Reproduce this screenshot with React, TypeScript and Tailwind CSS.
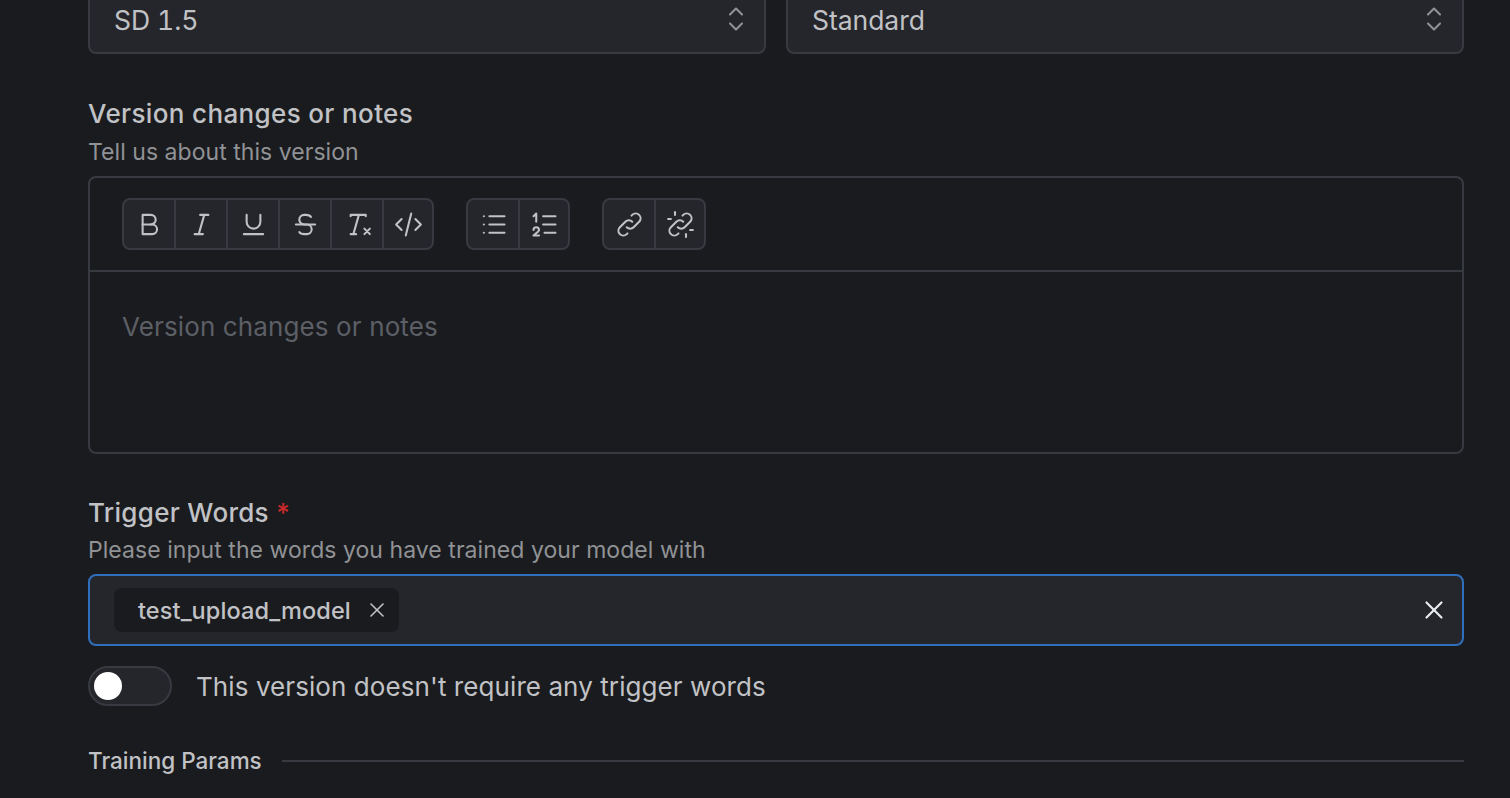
import { TbBold, TbItalic, TbUnderline, TbStrikethrough, TbClearFormatting, TbCode, TbList, TbListNumbers, TbSelector, TbX } from "react-icons/tb";
import type { ComponentType } from "react";

type IconProps = { size?: number; strokeWidth?: number };

const TbLinkOld = ({ size = 32, strokeWidth = 1.5 }: IconProps) => (
  <svg width={size} height={size} viewBox="0 0 24 24" fill="none" stroke="currentColor" strokeWidth={strokeWidth} strokeLinecap="round" strokeLinejoin="round">
    <path d="M10 14a3.5 3.5 0 0 0 5 0l4 -4a3.5 3.5 0 0 0 -5 -5l-.5 .5" />
    <path d="M14 10a3.5 3.5 0 0 0 -5 0l-4 4a3.5 3.5 0 0 0 5 5l.5 -.5" />
  </svg>
);

const TbUnlinkOld = ({ size = 32, strokeWidth = 1.5 }: IconProps) => (
  <svg width={size} height={size} viewBox="0 0 24 24" fill="none" stroke="currentColor" strokeWidth={strokeWidth} strokeLinecap="round" strokeLinejoin="round">
    <path d="M10 14a3.5 3.5 0 0 0 5 0l4 -4a3.5 3.5 0 0 0 -5 -5l-.5 .5" />
    <path d="M14 10a3.5 3.5 0 0 0 -5 0l-4 4a3.5 3.5 0 0 0 5 5l.5 -.5" />
    <path d="M16 21v-2" />
    <path d="M19 16h2" />
    <path d="M3 8h2" />
    <path d="M8 3v2" />
  </svg>
);

function Group({ icons }: { icons: ComponentType<IconProps>[] }) {
  return (
    <div className="flex">
      {icons.map((Icon, i) => (
        <div
          key={i}
          className={`flex h-[52px] w-[54px] items-center justify-center border-2 border-[#373a40] bg-[#25262b] text-[#c1c2c5] first:rounded-l-lg last:w-[52px] last:rounded-r-lg ${i > 0 ? "-ml-0.5" : ""}`}
        >
          <Icon size={33} strokeWidth={1.5} />
        </div>
      ))}
    </div>
  );
}

function Select({ value }: { value: string }) {
  return (
    <div className="flex h-[66px] flex-1 items-center justify-between rounded-lg border-2 border-[#373a40] bg-[#25262b] pl-6 pr-2.5 text-[26.5px] tracking-[-0.05px] text-[#c1c2c5] tabular-nums">
      <span>{value}</span>
      <TbSelector size={36} strokeWidth={1.4} className="-translate-y-0.5 text-[#909296]" />
    </div>
  );
}

export default function App() {
  return (
    <div className="h-[798px] overflow-hidden bg-[#1a1b1e] pl-[88px] pr-[46px] font-['Inter',sans-serif]">
      <div className="-mt-[12px] flex gap-5">
        <Select value="SD 1.5" />
        <Select value="Standard" />
      </div>

      <div className="mt-[41px] h-[38px] text-[26px] font-medium leading-[37px] tracking-[0.36px] text-[#c1c2c5]">Version changes or notes</div>
      <div className="h-[37px] text-[23px] leading-[38px] tracking-[0.04px] text-[#909296]">Tell us about this version</div>
      <div className="mt-1.5 h-[278px] rounded-lg border-2 border-[#373a40]">
        <div className="flex h-[94px] gap-8 border-b-2 border-[#373a40] pl-8 pt-5">
          <Group icons={[TbBold, TbItalic, TbUnderline, TbStrikethrough, TbClearFormatting, TbCode]} />
          <Group icons={[TbList, TbListNumbers]} />
          <Group icons={[TbLinkOld, TbUnlinkOld]} />
        </div>
        <div className="pl-8 pt-[33px] text-[26px] leading-[44px] tracking-[0.12px] text-[#5c5f66]">Version changes or notes</div>
      </div>

      <div className="mt-10 h-[38px] text-[26px] font-medium leading-[37px] tracking-[0.3px] text-[#c1c2c5]">
        Trigger Words <span className="text-[#c92a2a]">*</span>
      </div>
      <div className="h-[36px] text-[23px] leading-[36px] tracking-[0.05px] text-[#909296]">Please input the words you have trained your model with</div>
      <div className="mt-1.5 flex h-[72px] items-center justify-between rounded-lg border-2 border-[#2f6fbb] bg-[#25262b] pl-6 pr-[13px]">
        <div className="flex h-11 items-center gap-[14px] rounded-lg bg-[#1a1b1e] pl-6 pr-2.5 text-[23.5px] font-medium tracking-[0.1px] text-[#c1c2c5]">
          <span className="pt-0.5">test_upload_model</span>
          <TbX size={24} strokeWidth={1.6} />
        </div>
        <TbX size={30} strokeWidth={1.7} className="text-[#e9ecef]" />
      </div>

      <div className="mt-5 flex items-center gap-6">
        <div className="flex h-10 w-[84px] items-center rounded-full border-2 border-[#373a40] bg-[#25262b] pl-1">
          <div className="h-7 w-7 rounded-full bg-white" />
        </div>
        <span className="text-[26px] tracking-[0.08px] text-[#c1c2c5]">This version doesn't require any trigger words</span>
      </div>

      <div className="mt-[38px] flex items-center gap-5">
        <span className="text-[22.5px] font-medium text-[#c1c2c5]">Training Params</span>
        <div className="h-0.5 flex-1 bg-[#373a40]" />
      </div>
    </div>
  );
}
